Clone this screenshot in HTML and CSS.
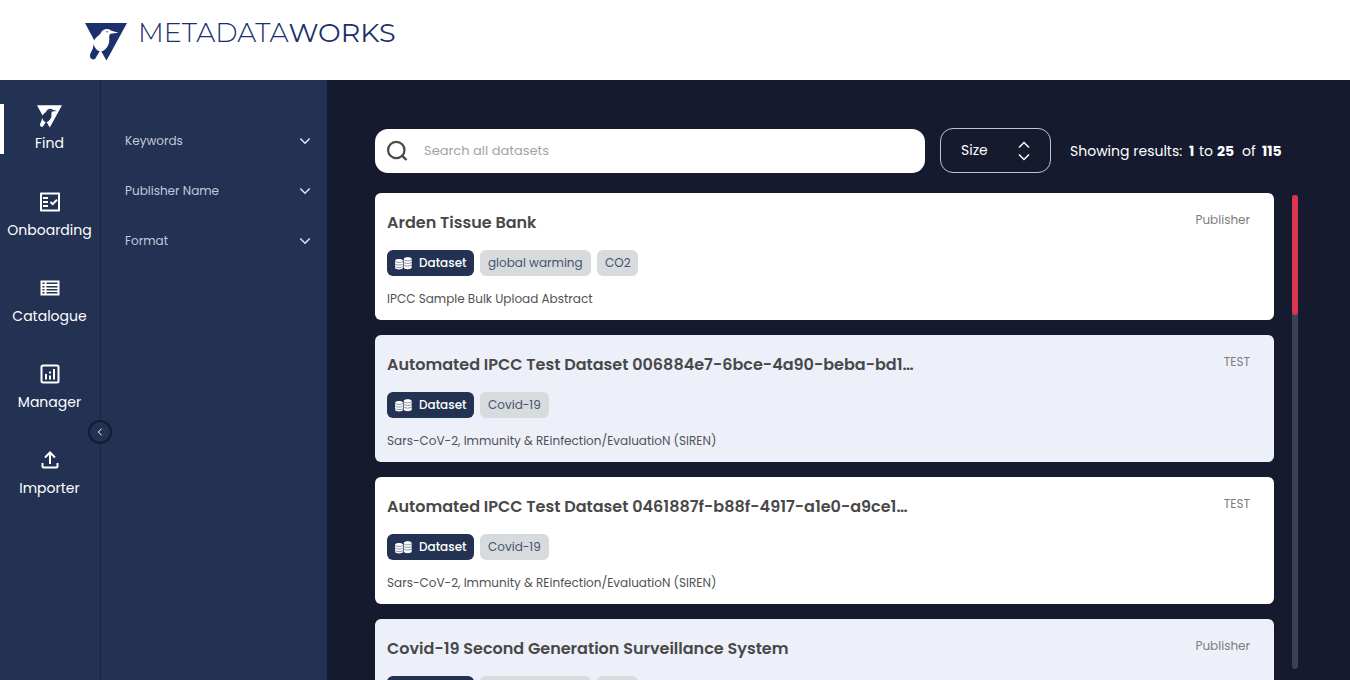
FILE: index.html
```html
<!DOCTYPE html>
<html lang="en">
<head>
<meta charset="utf-8">
<title>Metadata Works</title>
<link rel="stylesheet" href="styles.css">
</head>
<body>
<svg class="sprite" width="0" height="0">
  <symbol id="chevron" viewBox="0 0 12 8"><path d="M1.300 1.500 6 6.200l4.700-4.700" fill="none" stroke="currentColor" stroke-width="1.600"/></symbol>
  <symbol id="bird" viewBox="0 0 42 38">
    <path fill="currentColor" fill-rule="evenodd" d="M0 0H42L21.500 37.500 16.300 28.500C20 27.500 24.300 23 24.300 17C24.300 14 23.800 12 25.500 10.700L33.500 9.700 26.500 7.800C23 4.500 17.500 6 15.800 10C14 13 10.500 14 9.300 17.500Z"/>
    <path fill="currentColor" d="M8.300 21C9 26 5.500 28.500 5 32.500C4.800 36 8 37.300 10.200 35.700L14.700 28.300C11.500 27.500 10 25 8.300 21Z"/>
    <circle cx="22" cy="8.800" r=".7" fill="currentColor"/>
  </symbol>
  <symbol id="coins" viewBox="0 0 17 13">
    <g fill="currentColor"><path d="M0 3.700C0 1.500 8 1.500 8 3.700V10.700C8 13 0 13 0 10.700ZM8.700 2C8.700-.3 16.700-.3 16.700 2V10.500C16.700 12.800 8.700 12.800 8.700 10.500Z"/></g>
    <g fill="none" stroke="#233152" stroke-width=".5"><path d="M0 4.400C1.500 5.800 6.500 5.800 8 4.400M0 7C1.500 8.400 6.500 8.400 8 7M0 9.600C1.500 11 6.500 11 8 9.600M8.700 2.800C10.200 4.200 15.200 4.200 16.700 2.800M8.700 5.400C10.200 6.800 15.200 6.800 16.700 5.400M8.700 8C10.200 9.400 15.200 9.400 16.700 8"/></g>
  </symbol>
</svg>
<header class="header">
  <svg class="logo-mark"><use href="#bird"/></svg>
  <div class="logo-text"><span class="logo-light">METADATA</span><span class="logo-bold">WORKS</span></div>
</header>
<div class="shell">
  <nav class="nav">
    <a class="nav-item active"><svg class="nav-bird"><use href="#bird"/></svg><span>Find</span></a>
    <a class="nav-item"><svg viewBox="0 0 24 24"><path fill="none" stroke="currentColor" stroke-width="2" d="M3 3.500H21V20.500H3Z" stroke-linejoin="round"/><path fill="none" stroke="currentColor" stroke-width="2" d="M5 8h5M5 12h5M5 16h5M12.500 12l2.200 2.200 4.300-4.400"/></svg><span>Onboarding</span></a>
    <a class="nav-item"><svg viewBox="0 0 24 24"><path fill="currentColor" fill-rule="evenodd" d="M2.500 4.500h19v15h-19ZM4.500 6.500v1.500h2v-1.500ZM8.500 6.500v1.500h11v-1.500ZM4.500 10v1.500h2v-1.500ZM8.500 10v1.500h11v-1.500ZM4.500 13v1.500h2v-1.500ZM8.500 13v1.500h11v-1.500ZM4.500 16v1.500h2v-1.500ZM8.500 16v1.500h11v-1.500Z"/></svg><span>Catalogue</span></a>
    <a class="nav-item"><svg viewBox="0 0 24 24"><rect x="3.500" y="3.500" width="17" height="17" rx="1.500" fill="none" stroke="currentColor" stroke-width="2"/><path stroke="currentColor" stroke-width="2" d="M8 12v5.500M12 13.500v4M12 9.500v2M16 7v10.500"/></svg><span>Manager</span></a>
    <a class="nav-item"><svg viewBox="0 0 24 24"><path fill="none" stroke="currentColor" stroke-width="2" d="M12 16V5M7 9.500 12 4.500 17 9.500M4.500 15v3.500q0 1 1 1h13q1 0 1-1V15"/></svg><span>Importer</span></a>
    <button class="collapse"><svg viewBox="0 0 6 8"><path d="M4.700.6 1.300 4l3.400 3.400" fill="none" stroke="#fff"/></svg></button>
  </nav>
  <aside class="filters">
    <div class="filter"><span>Keywords</span><svg><use href="#chevron"/></svg></div>
    <div class="filter"><span>Publisher Name</span><svg><use href="#chevron"/></svg></div>
    <div class="filter"><span>Format</span><svg><use href="#chevron"/></svg></div>
  </aside>
  <main class="main">
    <div class="toolbar">
      <div class="search"><svg viewBox="0 0 22 22"><circle cx="9.300" cy="10" r="8.200" fill="none" stroke="currentColor" stroke-width="2.200"/><path d="M14.800 15.300 19.500 20" stroke="currentColor" stroke-width="2.400"/></svg><span>Search all datasets</span></div>
      <div class="size"><span>Size</span><svg viewBox="0 0 12 20"><path d="M1 6.500 6 1.500l5 5M1 13.500l5 5 5-5" fill="none" stroke="#fff" stroke-width="1.500"/></svg></div>
      <div class="count"><span class="c-show">Showing results:</span><b class="c-one">1</b><span class="c-to">to</span><b class="c-25">25</b><span class="c-of">of</span><b>115</b></div>
    </div>
    <div class="results">
      <div class="list">
        <article class="card">
          <div class="card-head"><h2>Arden Tissue Bank</h2><span class="publisher">Publisher</span></div>
          <div class="tags"><span class="tag dataset"><svg><use href="#coins"/></svg><span>Dataset</span></span><span class="tag t-gw">global warming</span><span class="tag t-co">CO2</span></div>
          <p>IPCC Sample Bulk Upload Abstract</p>
        </article>
        <article class="card alt">
          <div class="card-head"><h2>Automated IPCC Test Dataset 006884e7-6bce-4a90-beba-bd1…</h2><span class="publisher">TEST</span></div>
          <div class="tags"><span class="tag dataset"><svg><use href="#coins"/></svg><span>Dataset</span></span><span class="tag t-cov">Covid-19</span></div>
          <p>Sars-CoV-2, Immunity &amp; REinfection/EvaluatioN (SIREN)</p>
        </article>
        <article class="card">
          <div class="card-head"><h2>Automated IPCC Test Dataset 0461887f-b88f-4917-a1e0-a9ce1…</h2><span class="publisher">TEST</span></div>
          <div class="tags"><span class="tag dataset"><svg><use href="#coins"/></svg><span>Dataset</span></span><span class="tag t-cov">Covid-19</span></div>
          <p>Sars-CoV-2, Immunity &amp; REinfection/EvaluatioN (SIREN)</p>
        </article>
        <article class="card alt last">
          <div class="card-head"><h2>Covid-19 Second Generation Surveillance System</h2><span class="publisher">Publisher</span></div>
          <div class="tags"><span class="tag dataset"></span><span class="tag t-gw"></span><span class="tag t-co"></span></div>
        </article>
      </div>
      <div class="track"><div class="thumb"></div></div>
    </div>
  </main>
</div>
</body>
</html>
```
FILE: styles.css
```css
* { box-sizing: border-box; }
body { margin: 0; height: 680px; overflow: hidden; background: #151a2e; font-family: Poppins, Inter, sans-serif; font-size: 14px; }
.sprite { position: absolute; }
span, b, h2, p { white-space: nowrap; }
.header { height: 80px; background: #fff; display: flex; align-items: flex-start; padding: 23px 0 0 85px; color: #1b306c; }
.logo-mark { width: 42px; height: 38px; margin-right: 11px; }
.logo-text { font-family: Montserrat, Lato, sans-serif; font-size: 27px; line-height: 34px; margin-top: -7px; display: flex; }
.logo-light { font-weight: 300; }
.logo-bold { font-weight: 400; }
.shell { display: flex; height: 600px; overflow: hidden; }
.nav { position: relative; width: 101px; background: #233152; border-right: 1px solid #1a2646; padding-top: 24px; display: flex; flex-direction: column; gap: 36px; color: #fff; }
.nav-item { height: 50px; display: flex; flex-direction: column; align-items: center; font-size: 14px; line-height: 32px; flex: none; padding-right: 1px; }
.nav-item svg { width: 24px; height: 24px; flex: none; }
.nav-item .nav-bird { width: 25px; height: 23px; margin-top: 1px; }
.nav-item.active { border-left: 4px solid #fff; padding-right: 5px; line-height: 31px; }
.collapse { position: absolute; left: 88px; top: 340px; width: 24px; height: 24px; border: 2px solid #161b2f; border-radius: 50%; background: #233152; padding: 0; display: flex; align-items: center; justify-content: center; }
.collapse svg { width: 6px; height: 8px; margin-right: 1px; }
.filters { width: 226px; background: #233152; padding: 36px 16px 0 24px; color: #c2c9dc; }
.filter { height: 50px; display: flex; align-items: center; justify-content: space-between; font-size: 12px; }
.filter svg { width: 12px; height: 8px; color: #dbe2f2; }
.main { flex: 1; padding: 48px 52px 0 48px; }
.toolbar { display: flex; align-items: center; height: 45px; color: #fff; }
.search { width: 550px; height: 44px; margin-top: 1px; border-radius: 13px; background: #fff; display: flex; align-items: center; padding-left: 12px; color: #a3a3a3; font-size: 13px; }
.search svg { width: 22px; height: 22px; color: #484848; margin-right: 15px; }
.size { width: 111px; height: 45px; margin-left: 15px; border: 1px solid #bfc4d4; border-radius: 13px; display: flex; align-items: center; justify-content: space-between; padding: 0 20px; }
.size svg { width: 12px; height: 20px; }
.count { display: flex; margin-left: 19px; margin-top: 1px; }
.c-show { width: 119px; }
.c-one { width: 10px; }
.c-to { width: 18px; }
.c-25 { width: 25px; }
.c-of { width: 20px; }
.results { display: flex; justify-content: space-between; padding-top: 20px; }
.list { width: 899px; display: flex; flex-direction: column; gap: 15px; }
.card { height: 127px; border-radius: 6px; background: #fff; padding: 17px 24px 0 12px; color: #525252; }
.card.alt { background: #edf0f9; }
.card.last { height: 61px; overflow: hidden; border-radius: 6px 6px 0 0; }
.card-head { display: flex; justify-content: space-between; height: 40px; }
.card h2 { margin: 0; font-size: 16px; font-weight: 600; line-height: 25px; color: #484848; }
.publisher { font-size: 12px; line-height: 20px; color: #7d7d7d; }
.tags { display: flex; gap: 6px; height: 26px; }
.tag { height: 26px; line-height: 26px; border-radius: 6px; background: #d7dbde; color: #485371; font-size: 12px; padding-left: 8px; }
.tag.dataset { width: 87px; background: #233152; color: #fff; font-weight: 500; display: flex; align-items: center; }
.dataset svg { width: 17px; height: 13px; margin-right: 7px; }
.t-gw { width: 111px; }
.t-co { width: 41px; }
.t-cov { width: 69px; }
.card p { margin: 13px 0 0; font-size: 12px; line-height: 20px; }
.track { width: 6px; height: 474px; margin-top: 2px; border-radius: 3px; background: #3b4055; }
.thumb { height: 120px; border-radius: 3px; background: #dc354f; }
```
